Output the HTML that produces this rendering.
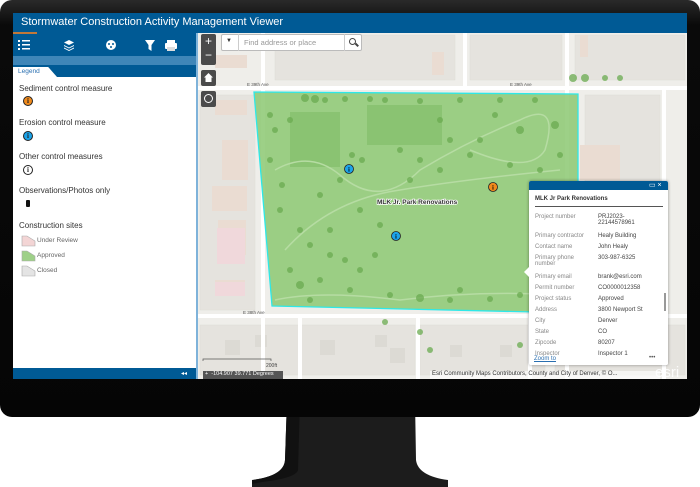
<!DOCTYPE html>
<html><head><meta charset="utf-8"><style>
*{margin:0;padding:0;box-sizing:border-box}
body{width:700px;height:487px;background:#fff;position:relative;overflow:hidden;font-family:"Liberation Sans",sans-serif}
.abs{position:absolute}
#bezel{left:0;top:0;width:700px;height:417px;background:linear-gradient(#2a2a2a,#0a0a0a 6%,#050505);border-radius:12px}
#screen{left:13px;top:13px;width:674px;height:366px;background:#efeeea;overflow:hidden}
.t{position:absolute;font-size:8px;color:#333;white-space:nowrap}
.ic{position:absolute;width:10px;height:10px;border-radius:50%;border:1px solid #222;font:bold 7px "Liberation Serif",serif;color:#222;text-align:center;line-height:8px}
.row{position:absolute;left:6px;font-size:6px;color:#888;white-space:nowrap}
.val{position:absolute;left:69px;font-size:6px;color:#444;white-space:nowrap}
</style></head><body>
<svg class="abs" style="left:0;top:400px" width="700" height="87">
<path d="M287 0 L415 0 L416 60 Q418 76 448 80 L448 87 L252 87 L252 80 Q284 76 285 60 Z" fill="#1c1c1c"/>
<path d="M287 0 L300 0 L298 70 Q296 78 262 82 L252 84 L252 80 Q284 76 285 60Z" fill="#111"/>
</svg>
<div id="bezel" class="abs"></div>
<div id="screen" class="abs">
 <div class="abs" style="left:0;top:0;width:674px;height:20px;background:#005a95"></div>
 <div class="t" style="left:8px;top:3px;font-size:11px;color:#fff">Stormwater Construction Activity Management Viewer</div>
 <div class="abs" style="left:0;top:20px;width:183px;height:23px;background:#005a95"></div>
 <div class="abs" style="left:0;top:19px;width:24px;height:2px;background:#c0783a"></div>
 <div class="abs" style="left:0;top:43px;width:183px;height:9px;background:#3f86b8"></div>
 <div class="abs" style="left:0;top:52px;width:183px;height:12px;background:#005a95"></div>
 <div class="abs" style="left:0;top:54px;width:44px;height:10px;background:#fff;clip-path:polygon(0 0,80% 0,100% 100%,0 100%)"></div>
 <div class="t" style="left:5px;top:55px;font-size:6.5px;color:#2a6fb0">Legend</div>
 <svg class="abs" style="left:0;top:20px" width="183" height="23">
  <g fill="#fff"><rect x="5" y="7" width="2" height="2"/><rect x="9" y="7" width="8" height="1.5"/><rect x="5" y="11" width="2" height="2"/><rect x="9" y="11" width="8" height="1.5"/><rect x="5" y="15" width="2" height="2"/><rect x="9" y="15" width="8" height="1.5"/>
  <path d="M56 7 L61 9.5 L56 12 L51 9.5Z"/><path d="M51 12 L56 14.5 L61 12 L61 13 L56 15.5 L51 13Z"/><path d="M51 14.5 L56 17 L61 14.5 L61 15.5 L56 18 L51 15.5Z"/>
  <circle cx="98" cy="12" r="5"/><path d="M132 7 L142 7 L138.5 12 L138.5 18 L135.5 16 L135.5 12Z"/>
  <rect x="154" y="7" width="8" height="3"/><rect x="152" y="10" width="12" height="6" rx="1"/><rect x="154" y="14" width="8" height="4" fill="#ddd"/></g>
  <circle cx="96" cy="11" r="1" fill="#005a95"/><circle cx="100" cy="11" r="1" fill="#005a95"/><circle cx="98" cy="14" r="1" fill="#005a95"/>
 </svg>
 <div class="abs" style="left:0;top:64px;width:183px;height:291px;background:#fff"></div>
 <div class="abs" style="left:183px;top:20px;width:2px;height:346px;background:#7fb3da"></div>
 <div class="t" style="left:6px;top:71px">Sediment control measure</div>
 <div class="ic" style="left:10px;top:83px;background:#f08a1c">i</div>
 <div class="t" style="left:6px;top:105px">Erosion control measure</div>
 <div class="ic" style="left:10px;top:118px;background:#1ca3e8">i</div>
 <div class="t" style="left:6px;top:139px">Other control measures</div>
 <div class="ic" style="left:10px;top:152px;background:#fff">i</div>
 <div class="t" style="left:6px;top:173px">Observations/Photos only</div>
 <div class="abs" style="left:13px;top:187px;width:4px;height:7px;background:#111;border-radius:1px"></div>
 <div class="t" style="left:6px;top:208px">Construction sites</div>
 <svg class="abs" style="left:8px;top:222px" width="16" height="45">
  <path d="M1 1 L6 1 L14 6 L14 11 L1 11Z" fill="#f3d5d5" stroke="#aaa" stroke-width=".6"/>
  <path d="M1 16 L6 16 L14 21 L14 26 L1 26Z" fill="#9ed088" stroke="#aaa" stroke-width=".6"/>
  <path d="M1 31 L6 31 L14 36 L14 41 L1 41Z" fill="#e4e4e4" stroke="#aaa" stroke-width=".6"/>
 </svg>
 <div class="t" style="left:24px;top:224px;font-size:6.5px;color:#666">Under Review</div>
 <div class="t" style="left:24px;top:239px;font-size:6.5px;color:#666">Approved</div>
 <div class="t" style="left:24px;top:254px;font-size:6.5px;color:#666">Closed</div>
 <div class="abs" style="left:0;top:355px;width:183px;height:11px;background:#005a95"></div>
 <div class="t" style="left:168px;top:357px;font-size:6px;color:#fff">◂◂</div>
 <svg class="abs" style="left:185px;top:20px" width="489" height="346" viewBox="198 33 489 346">
  <rect x="198" y="33" width="489" height="346" fill="#efeeea"/>
  <g fill="#e5e3de" stroke="#dedcd6" stroke-width=".5">
   <rect x="275" y="35" width="180" height="45"/><rect x="470" y="35" width="92" height="45"/><rect x="575" y="35" width="110" height="45"/>
   <rect x="200" y="95" width="55" height="215"/><rect x="585" y="95" width="75" height="215"/><rect x="200" y="325" width="215" height="50"/><rect x="420" y="325" width="125" height="50"/><rect x="555" y="325" width="130" height="50"/>
  </g>
  <g fill="#eadcd2"><rect x="215" y="55" width="32" height="13"/><rect x="432" y="52" width="12" height="23"/><rect x="580" y="35" width="8" height="22"/><rect x="215" y="100" width="32" height="15"/><rect x="222" y="140" width="26" height="40"/><rect x="212" y="186" width="35" height="25"/><rect x="218" y="220" width="28" height="35"/><rect x="215" y="280" width="30" height="15"/><rect x="580" y="145" width="40" height="35"/></g>
  <g fill="#f0d8db"><rect x="217" y="228" width="28" height="36"/><rect x="215" y="282" width="30" height="14"/></g>
  <g fill="#dcdad4"><rect x="225" y="340" width="15" height="15"/><rect x="255" y="335" width="12" height="12"/><rect x="320" y="340" width="15" height="15"/><rect x="375" y="335" width="12" height="12"/><rect x="390" y="348" width="15" height="15"/><rect x="450" y="345" width="12" height="12"/><rect x="500" y="345" width="12" height="12"/><rect x="600" y="345" width="12" height="12"/><rect x="640" y="350" width="12" height="12"/></g>
  <g stroke="#fff" stroke-width="4" fill="none"><path d="M198 88 H687"/><path d="M198 316 H687"/><path d="M263 33 V379"/><path d="M567 33 V379"/><path d="M664 90 V379"/><path d="M465 33 V88"/><path d="M300 318 V379"/><path d="M418 318 V379"/><path d="M530 318 V379"/></g>
  <g font-size="4.5" fill="#555" font-family="Liberation Sans"><text x="247" y="86">E 39th Ave</text><text x="510" y="86">E 39th Ave</text><text x="243" y="314">E 38th Ave</text></g>
  <path d="M254 92 L578 94 L578 313 L272 306 Z" fill="#8cc872" fill-opacity=".85" stroke="#2ee8e8" stroke-width="1.3"/>
  <g fill="#7fbd66"><rect x="290" y="112" width="50" height="55" opacity=".6"/><rect x="367" y="105" width="75" height="40" opacity=".6"/></g>
  <g stroke="#b6dca3" stroke-width="1.5" fill="none"><path d="M275 170 Q310 150 340 175 Q380 210 420 170 Q470 140 520 120 Q560 100 545 150 Q530 175 470 150"/><path d="M285 250 Q330 200 400 190 Q460 180 560 170"/><path d="M275 300 Q320 290 400 300 Q480 290 560 295"/></g>
  <g fill="#6aab50" opacity=".75">
   <circle cx="305" cy="98" r="4"/><circle cx="315" cy="99" r="4"/><circle cx="370" cy="99" r="3"/><circle cx="385" cy="100" r="3"/><circle cx="420" cy="101" r="3"/><circle cx="460" cy="100" r="3"/><circle cx="500" cy="100" r="3"/><circle cx="535" cy="100" r="3"/><circle cx="270" cy="115" r="3"/><circle cx="275" cy="130" r="3"/><circle cx="270" cy="160" r="3"/><circle cx="352" cy="155" r="3"/><circle cx="362" cy="160" r="3"/><circle cx="400" cy="150" r="3"/><circle cx="420" cy="160" r="3"/><circle cx="440" cy="170" r="3"/><circle cx="470" cy="155" r="3"/><circle cx="520" cy="130" r="4"/><circle cx="555" cy="125" r="4"/><circle cx="560" cy="155" r="3"/><circle cx="540" cy="170" r="3"/><circle cx="300" cy="230" r="3"/><circle cx="310" cy="245" r="3"/><circle cx="330" cy="255" r="3"/><circle cx="345" cy="260" r="3"/><circle cx="360" cy="270" r="3"/><circle cx="290" cy="270" r="3"/><circle cx="300" cy="285" r="4"/><circle cx="320" cy="280" r="3"/><circle cx="350" cy="290" r="3"/><circle cx="390" cy="295" r="3"/><circle cx="420" cy="298" r="4"/><circle cx="450" cy="300" r="3"/><circle cx="490" cy="299" r="3"/><circle cx="360" cy="210" r="3"/><circle cx="380" cy="225" r="3"/><circle cx="280" cy="210" r="3"/><circle cx="340" cy="180" r="3"/><circle cx="510" cy="165" r="3"/><circle cx="210" cy="94" r="3"/><circle cx="573" cy="78" r="4"/><circle cx="585" cy="78" r="4"/><circle cx="605" cy="78" r="3"/><circle cx="620" cy="78" r="3"/><circle cx="385" cy="322" r="3"/><circle cx="420" cy="332" r="3"/><circle cx="430" cy="350" r="3"/><circle cx="520" cy="345" r="3"/>
   <circle cx="282" cy="185" r="3"/><circle cx="290" cy="120" r="3"/><circle cx="325" cy="100" r="3"/><circle cx="345" cy="99" r="3"/><circle cx="440" cy="120" r="3"/><circle cx="480" cy="140" r="3"/><circle cx="495" cy="115" r="3"/><circle cx="545" cy="190" r="3"/><circle cx="560" cy="230" r="3"/><circle cx="555" cy="270" r="3"/><circle cx="330" cy="230" r="3"/><circle cx="375" cy="255" r="3"/><circle cx="310" cy="300" r="3"/><circle cx="460" cy="290" r="3"/><circle cx="520" cy="295" r="3"/><circle cx="320" cy="195" r="3"/><circle cx="410" cy="180" r="3"/><circle cx="450" cy="140" r="3"/>
  </g>
  <text x="377" y="204" font-size="6.5" font-weight="bold" fill="#333" stroke="#fff" stroke-width="1.5" paint-order="stroke" font-family="Liberation Sans">MLK Jr. Park Renovations</text>
  <g font-family="Liberation Serif" font-weight="bold" font-size="6" text-anchor="middle">
   <circle cx="349" cy="169" r="4.5" fill="#1ca3e8" stroke="#222" stroke-width=".8"/><text x="349" y="171.5">i</text>
   <circle cx="396" cy="236" r="4.5" fill="#1ca3e8" stroke="#222" stroke-width=".8"/><text x="396" y="238.5">i</text>
   <circle cx="493" cy="187" r="4.5" fill="#f08a1c" stroke="#222" stroke-width=".8"/><text x="493" y="189.5">i</text>
  </g>
  <path d="M203 361 V359 H271 V361" stroke="#555" stroke-width=".7" fill="none"/>
  <text x="266" y="367" font-size="5" fill="#444" font-family="Liberation Sans">200ft</text>
  <text x="655" y="377" font-size="15" fill="#fff" fill-opacity=".85" font-family="Liberation Sans">esri</text>
 </svg>
 <div class="abs" style="left:188px;top:21px;width:15px;height:31px;background:#4b4b4b;border-radius:2px;color:#fff;font-size:12px;text-align:center;line-height:14px">+<br>−</div>
 <div class="abs" style="left:188px;top:57px;width:15px;height:16px;background:#4b4b4b;border-radius:2px"></div>
 <svg class="abs" style="left:190px;top:59px" width="11" height="11"><path d="M5.5 1 L10 5.5 H8.5 V10 H2.5 V5.5 H1Z" fill="#fff"/></svg>
 <div class="abs" style="left:188px;top:78px;width:15px;height:16px;background:#4b4b4b;border-radius:2px"></div>
 <div class="abs" style="left:191px;top:81px;width:9px;height:9px;border:1.5px solid #fff;border-radius:50%"></div>
 <div class="abs" style="left:208px;top:21px;width:141px;height:17px;background:#fff;border:1px solid #bbb;border-radius:2px"></div>
 <div class="abs" style="left:225px;top:21px;width:1px;height:17px;background:#ccc"></div>
 <div class="abs" style="left:331px;top:21px;width:1px;height:17px;background:#ccc"></div>
 <div class="t" style="left:213px;top:25px;font-size:6px;color:#333">▼</div>
 <div class="t" style="left:231px;top:25px;font-size:7.5px;color:#999">Find address or place</div>
 <div class="abs" style="left:336px;top:25px;width:7px;height:7px;border:1.3px solid #444;border-radius:50%"></div>
 <div class="abs" style="left:342px;top:31px;width:4px;height:1.5px;background:#444;transform:rotate(45deg)"></div>
 <div class="abs" style="left:190px;top:358px;width:80px;height:8px;background:#555"></div>
 <div class="t" style="left:192px;top:358px;font-size:5.5px;color:#fff">+ &nbsp;-104.907 39.771 Degrees</div>
 <div class="abs" style="left:417px;top:358px;width:230px;height:8px;background:rgba(255,255,255,.6)"></div>
 <div class="t" style="left:419px;top:358px;font-size:6px;color:#333">Esri Community Maps Contributors, County and City of Denver, © O...</div>
 <div class="abs" style="left:516px;top:168px;width:139px;height:184px;background:#fff;border-radius:2px;box-shadow:0 0 3px rgba(0,0,0,.4);overflow:hidden">
  <div class="abs" style="left:0;top:0;width:139px;height:9px;background:#005a95"></div>
  <div class="t" style="left:120px;top:0;font-size:7px;color:#fff">▭ ×</div>
  <div class="t" style="left:6px;top:15px;font-size:6px;font-weight:bold;color:#333">MLK Jr Park Renovations</div>
  <div class="abs" style="left:6px;top:25px;width:128px;height:1px;background:#555"></div>
  <div class="row" style="top:33px">Project number</div><div class="val" style="top:33px">PRJ2023-<br>22144578961</div>
  <div class="row" style="top:52px">Primary contractor</div><div class="val" style="top:52px">Healy Building</div>
  <div class="row" style="top:63px">Contact name</div><div class="val" style="top:63px">John Healy</div>
  <div class="row" style="top:74px">Primary phone<br>number</div><div class="val" style="top:74px">303-987-6325</div>
  <div class="row" style="top:93px">Primary email</div><div class="val" style="top:93px">brank@esri.com</div>
  <div class="row" style="top:104px">Permit number</div><div class="val" style="top:104px">CO0000012358</div>
  <div class="row" style="top:115px">Project status</div><div class="val" style="top:115px">Approved</div>
  <div class="row" style="top:126px">Address</div><div class="val" style="top:126px">3800 Newport St</div>
  <div class="row" style="top:137px">City</div><div class="val" style="top:137px">Denver</div>
  <div class="row" style="top:148px">State</div><div class="val" style="top:148px">CO</div>
  <div class="row" style="top:159px">Zipcode</div><div class="val" style="top:159px">80207</div>
  <div class="row" style="top:170px">Inspector</div><div class="val" style="top:170px">Inspector 1</div>
  <div class="abs" style="left:135px;top:112px;width:2px;height:18px;background:#999"></div>
  <div class="abs" style="left:0;top:175px;width:139px;height:9px;background:#fff"></div>
  <div class="t" style="left:5px;top:175px;font-size:6px;color:#2a6fb0;text-decoration:underline">Zoom to</div>
  <div class="t" style="left:120px;top:174px;font-size:6px;color:#555">•••</div>
 </div>
 <div class="abs" style="left:511px;top:254px;width:0;height:0;border-top:5px solid transparent;border-bottom:5px solid transparent;border-right:5px solid #fff"></div>
</div>
</body></html>
